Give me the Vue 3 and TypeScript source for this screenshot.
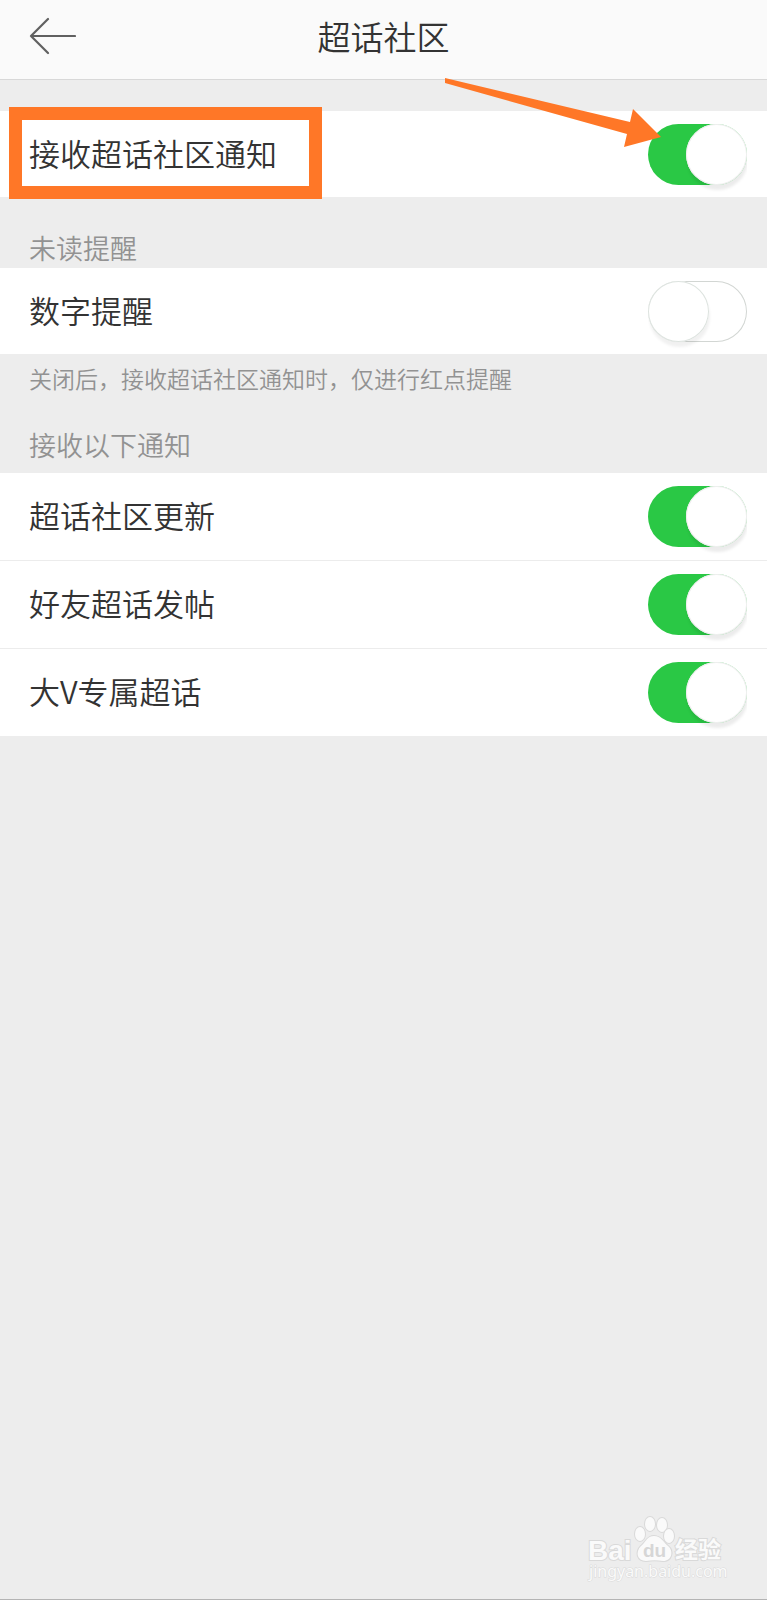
<script setup lang="ts">
import { ref } from 'vue'

interface Setting {
  id: string
  label: string
  on: boolean
}

const receive = ref(true)
const badge = ref(false)
const topics = ref<Setting[]>([
  { id: 'update', label: '超话社区更新', on: true },
  { id: 'friend', label: '好友超话发帖', on: true },
  { id: 'vip', label: '大V专属超话', on: true },
])
</script>

<template>
  <div class="page">
    <header class="bar">
      <button class="back" type="button" aria-label="返回">
        <svg width="48" height="38" viewBox="0 0 48 38" fill="none">
          <path d="M20 2 3 19 20 36M3 19H47" stroke="#606060" stroke-width="2.2" stroke-linecap="round" stroke-linejoin="round" />
        </svg>
      </button>
      <h1 class="title">超话社区</h1>
    </header>

    <main>
      <section class="group first">
        <div class="row">
          <label for="receive">接收超话社区通知</label>
          <input id="receive" v-model="receive" class="switch" type="checkbox" role="switch" />
          <span class="frame"></span>
          <svg class="arrow" width="217" height="72" viewBox="0 0 217 72">
            <path d="M1 1 186 45 189 32 217 60 180 70 183 57 1 6Z" fill="#ff7727" />
          </svg>
        </div>
      </section>

      <h2 class="caption lead">未读提醒</h2>
      <section class="group">
        <div class="row">
          <label for="badge">数字提醒</label>
          <input id="badge" v-model="badge" class="switch" type="checkbox" role="switch" />
        </div>
      </section>
      <p class="hint">关闭后，接收超话社区通知时，仅进行红点提醒</p>

      <h2 class="caption">接收以下通知</h2>
      <section class="group list">
        <div v-for="item in topics" :key="item.id" class="row">
          <label :for="item.id">{{ item.label }}</label>
          <input :id="item.id" v-model="item.on" class="switch" type="checkbox" role="switch" />
        </div>
      </section>
    </main>

    <svg class="mark" width="150" height="72" viewBox="0 0 150 72">
      <g fill="#fafafa" stroke="#d9d9d9" stroke-width="2" paint-order="stroke">
        <text class="latin" x="7" y="44">Bai</text>
        <ellipse cx="59" cy="18" rx="5" ry="7" />
        <ellipse cx="69" cy="8" rx="5" ry="7" />
        <ellipse cx="81" cy="9" rx="5" ry="7" />
        <ellipse cx="88" cy="20" rx="5" ry="7" />
        <path d="M73 20C80 20 82 26 87 30 93 35 91 45 82 45 76 44 71 44 65 45 56 45 54 36 60 30 65 26 66 20 73 20Z" />
        <text class="hanzi" x="94" y="42">经验</text>
        <text class="site" x="8" y="61">jingyan.baidu.com</text>
      </g>
      <text class="du" x="62" y="41">du</text>
    </svg>
  </div>
</template>

<style>
body {
  margin: 0;
}
</style>

<style scoped>
.page {
  position: relative;
  box-sizing: border-box;
  min-height: 100vh;
  border-bottom: 1px solid #b4b4b4;
  background: #ededed;
  color: #333;
  font-family: "Noto Sans CJK SC", sans-serif;
  font-weight: 350;
}

.bar {
  display: grid;
  grid-template-columns: 1fr auto 1fr;
  align-items: center;
  box-sizing: border-box;
  height: 80px;
  padding: 0 28px 8px;
  border-bottom: 1px solid #d8d8d8;
  background: #fafafa;
}

.back {
  display: flex;
  justify-self: start;
  padding: 0;
  border: 0;
  background: none;
}

.title {
  margin: 0;
  font-size: 33px;
  font-weight: 350;
  line-height: 48px;
}

.group {
  background: #fff;
}

.first {
  margin-top: 31px;
}

.row {
  position: relative;
  display: flex;
  align-items: center;
  justify-content: space-between;
  height: 86px;
  padding: 0 20px 0 29px;
  font-size: 31px;
  line-height: 46px;
}

.row label {
  padding-bottom: 3px;
}

.list .row {
  height: 87px;
}

.list .row + .row {
  border-top: 1px solid #ececec;
}

.switch {
  appearance: none;
  box-sizing: border-box;
  width: 99px;
  height: 61px;
  margin: 0;
  border-radius: 31px;
  background: #fff;
  box-shadow: inset 0 0 0 1px #d2d6d3;
  clip-path: inset(-1px 0 -12px 0);
}

.switch::before {
  content: "";
  display: block;
  width: 61px;
  height: 61px;
  border-radius: 50%;
  background: #fff;
  box-shadow: inset 0 0 0 1px #dde3df, 1px 5px 3px rgba(0, 0, 0, 0.06);
}

.switch:checked {
  background: #2ac845;
  box-shadow: none;
}

.switch:checked::before {
  margin-left: 38px;
  box-shadow: inset 0 0 0 1px #eee, 1px 5px 3px rgba(0, 0, 0, 0.08);
}

.frame {
  position: absolute;
  top: -4px;
  left: 9px;
  box-sizing: border-box;
  width: 313px;
  height: 92px;
  border: 13px solid #ff7727;
  pointer-events: none;
}

.arrow {
  position: absolute;
  top: -34px;
  right: 106px;
  pointer-events: none;
}

.caption {
  margin: 0;
  padding: 0 29px 8px;
  color: #929292;
  font-size: 27px;
  font-weight: 350;
  line-height: 40px;
}

.lead {
  padding-top: 31px;
  padding-bottom: 0;
}

.hint {
  margin: 0;
  padding: 7px 29px 30px;
  color: #929292;
  font-size: 23px;
  line-height: 34px;
}

.mark {
  position: absolute;
  right: 36px;
  bottom: 11px;
}

.latin {
  font: bold 28px "Liberation Sans", sans-serif;
}

.hanzi {
  font: bold 23px "Noto Sans CJK SC", sans-serif;
}

.site {
  font: 16px "Noto Sans", sans-serif;
  stroke-width: 1px;
}

.du {
  fill: #d6d6d6;
  font: bold 19px "Liberation Sans", sans-serif;
}
</style>
